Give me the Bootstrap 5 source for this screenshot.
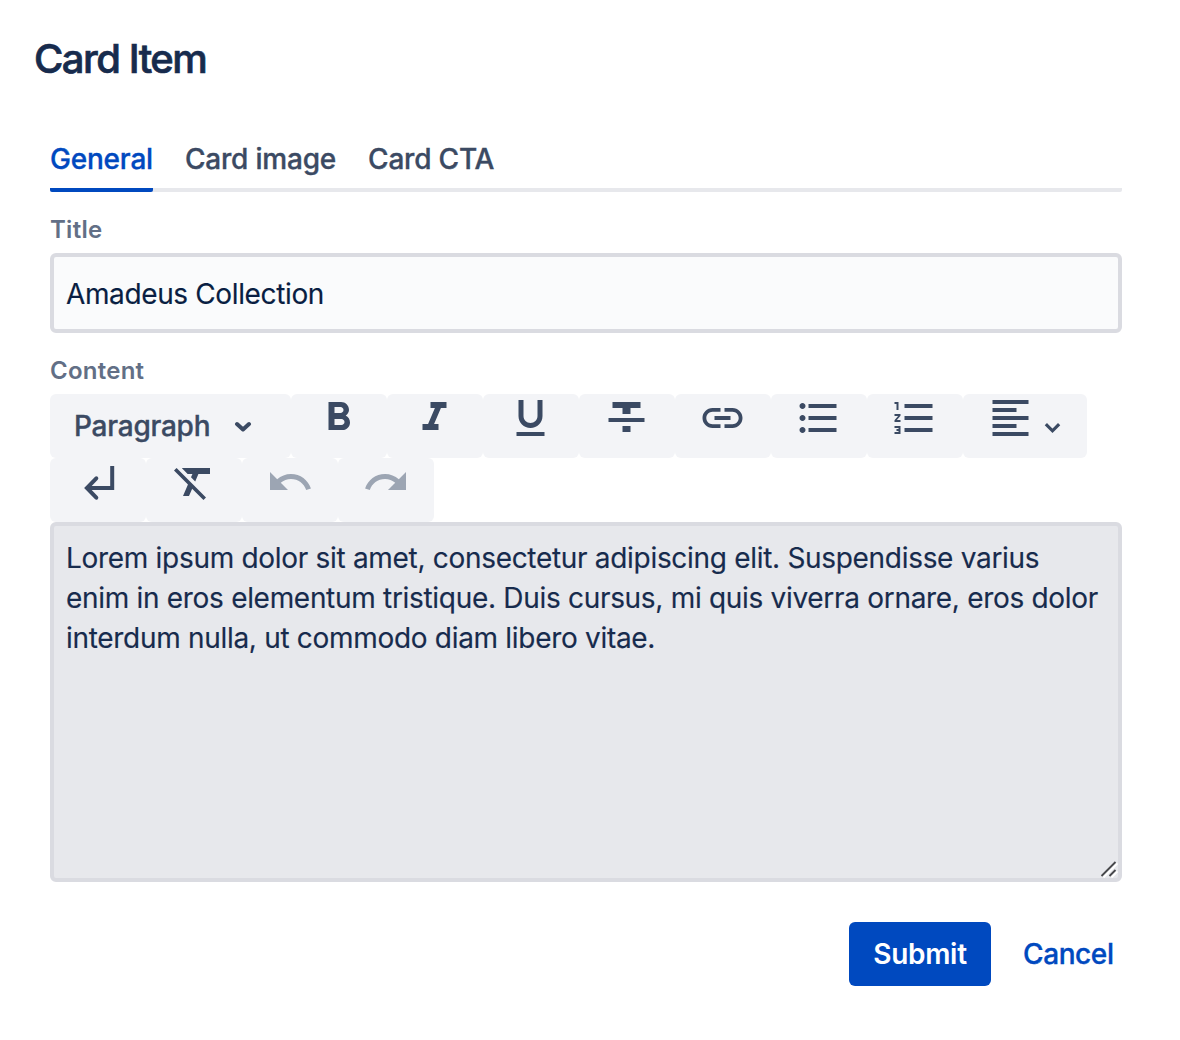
<!DOCTYPE html>
<html lang="en">
<head>
<meta charset="utf-8">
<meta name="viewport" content="width=device-width, initial-scale=1">
<title>Card Item</title>
<link href="https://cdn.jsdelivr.net/npm/bootstrap@5.3.0/dist/css/bootstrap.min.css" rel="stylesheet">
<style>
  body { font-family: Inter, "Liberation Sans", sans-serif; font-size: 28px; color: #172b4d; background: #fff; overflow: hidden; }
  .dialog-body { padding: 35px 58px 0 34px; }
  .dialog-title { font-size: 40px; line-height: 48px; font-weight: 500; letter-spacing: -1.5px; -webkit-text-stroke: .7px currentColor; color: #172b4d; margin: 0 0 52px; }
  .dialog-form { padding-left: 16px; }
  .form-tabs { height: 57px; gap: 32px; border-bottom: 4px solid #e7e8ec; border-radius: 2px; }
  .form-tabs .nav-link { padding: 4px 0 0; height: 57px; line-height: 40px; font-weight: 500; letter-spacing: -.2px; -webkit-text-stroke: .35px currentColor; color: #3b4a63; border-bottom: 4px solid transparent; border-radius: 2px; }
  .form-tabs .nav-link.active { color: #0049bf; border-color: #0049bf; }
  .field-label { display: block; padding: 22px 0 7px; font-size: 24px; line-height: 32px; font-weight: 600; letter-spacing: .25px; color: #626f86; }
  .title-input { height: 80px; padding: 2px 12px 0; border: 4px solid #dadbe1; border-radius: 6px; background: #fafbfc; font-size: 28px; letter-spacing: -.37px; -webkit-text-stroke: .15px currentColor; color: #091e42; }
  .tool { width: 96px; height: 64px; padding: 0 0 0 24px; border: 0; border-radius: 6px; background: #f3f4f7; color: #3b4a63; display: flex; align-items: flex-start; }
  .tool svg { display: block; fill: currentColor; flex: none; }
  .tool:nth-child(-n+9) > svg[width="48"] path { transform: translateX(-.25px); }
  .tool:disabled { color: #9ca5b3; }
  .tool-style { width: 240.5px; align-items: center; font-size: 28px; font-weight: 500; letter-spacing: -.24px; }
  .tool-style span { -webkit-text-stroke: .35px currentColor; }
  .tool-align { width: 124px; }
  .editor-text { height: 360px; padding: 12px; border: 4px solid #dadbe1; border-radius: 6px; background: #e7e8ec; font-size: 28px; line-height: 40px; letter-spacing: -.305px; -webkit-text-stroke: .15px currentColor; color: #172b4d; resize: none; overflow: hidden; }
  .grip { right: 4px; bottom: 4px; }
  .dialog-actions { padding-top: 40px; }
  .dialog-actions .btn { height: 64px; border: 0; border-radius: 6px; font-size: 28px; font-weight: 500; padding: 0; }
  .dialog-actions .btn-submit { width: 142px; background: #0049bf; color: #fff; font-weight: 600; letter-spacing: -.3px; }
  .dialog-actions .btn-cancel { width: 91px; margin: 0 8px 0 32px; color: #0049bf; letter-spacing: -.4px; -webkit-text-stroke: .35px currentColor; text-align: left; }
</style>
</head>
<body>
<main class="dialog-body">
  <h1 class="dialog-title">Card Item</h1>
  <form class="dialog-form">
    <nav class="nav form-tabs flex-nowrap">
      <a class="nav-link active" href="#">General</a>
      <a class="nav-link" href="#">Card image</a>
      <a class="nav-link" href="#">Card CTA</a>
    </nav>
    <label class="field-label" for="title">Title</label>
    <input class="form-control title-input" id="title" type="text" value="Amadeus Collection">
    <label class="field-label" for="content">Content</label>
    <div class="d-flex flex-wrap">
      <button type="button" class="tool tool-style"><span>Paragraph</span>
        <svg class="ms-4" width="18" height="12" viewBox="0 0 18 12"><path d="M3 4l6 5.500 6-5.500" fill="none" stroke="currentColor" stroke-width="4" stroke-linecap="round" stroke-linejoin="round"/></svg></button>
      <button type="button" class="tool" aria-label="Bold"><svg width="48" height="48" viewBox="0 0 24 24"><path d="M15.6 10.79c.97-.67 1.65-1.77 1.65-2.79 0-2.26-1.75-4-4-4H7v14h7.04c2.09 0 3.71-1.7 3.71-3.79 0-1.52-.86-2.82-2.15-3.42zM10 6.5h3c.83 0 1.5.67 1.5 1.5s-.67 1.5-1.5 1.5h-3v-3zm3.5 9H10v-3h3.5c.83 0 1.5.67 1.5 1.5s-.67 1.5-1.5 1.5z"/></svg></button>
      <button type="button" class="tool" aria-label="Italic"><svg width="48" height="48" viewBox="0 0 24 24"><path d="M10 4v3h2.21l-3.42 8H6v3h8v-3h-2.21l3.42-8H18V4z"/></svg></button>
      <button type="button" class="tool" aria-label="Underline"><svg width="48" height="48" viewBox="0 0 24 24"><path d="M12 17c3.31 0 6-2.69 6-6V3h-2.5v8c0 1.93-1.57 3.5-3.5 3.5S8.500 12.930 8.500 11V3H6v8c0 3.310 2.690 6 6 6zm-7 2v2h14v-2H5z"/></svg></button>
      <button type="button" class="tool" aria-label="Strikethrough"><svg width="48" height="48" viewBox="0 0 24 24"><path d="M10 19h4v-3h-4v3zM5 4v3h5v3h4V7h5V4H5zM3 14h18v-2H3v2z"/></svg></button>
      <button type="button" class="tool" aria-label="Link"><svg width="48" height="48" viewBox="0 0 24 24"><path d="M3.900 12c0-1.710 1.390-3.100 3.100-3.100h4V7H7c-2.760 0-5 2.240-5 5s2.240 5 5 5h4v-1.900H7c-1.710 0-3.100-1.390-3.100-3.100zM8 13h8v-2H8v2zm9-6h-4v1.900h4c1.710 0 3.100 1.390 3.100 3.100s-1.390 3.100-3.100 3.100h-4V17h4c2.760 0 5-2.240 5-5s-2.240-5-5-5z"/></svg></button>
      <button type="button" class="tool" aria-label="Bulleted list"><svg width="48" height="48" viewBox="0 0 24 24"><path d="M4 10.500c-.83 0-1.500.67-1.500 1.500s.67 1.500 1.500 1.500 1.500-.67 1.500-1.500-.67-1.500-1.500-1.500zm0-6c-.83 0-1.500.67-1.500 1.500S3.170 7.500 4 7.500 5.500 6.830 5.500 6 4.830 4.500 4 4.500zm0 12c-.83 0-1.500.68-1.500 1.500s.68 1.500 1.500 1.500 1.500-.68 1.500-1.500-.67-1.500-1.500-1.500zM7 19h14v-2H7v2zm0-6h14v-2H7v2zm0-8v2h14V5H7z"/></svg></button>
      <button type="button" class="tool" aria-label="Numbered list"><svg width="48" height="48" viewBox="0 0 24 24"><path d="M2 17h2v.5H3v1h1v.5H2v1h3v-4H2v1zm1-9h1V4H2v1h1v3zm-1 3h1.800L2 13.100v.9h3v-1H3.200L5 10.900V10H2v1zm5-6v2h14V5H7zm0 14h14v-2H7v2zm0-6h14v-2H7v2z"/></svg></button>
      <button type="button" class="tool tool-align" aria-label="Alignment"><svg width="48" height="48" viewBox="0 0 24 24"><path d="M15 15H3v2h12v-2zm0-8H3v2h12V7zM3 13h18v-2H3v2zm0 8h18v-2H3v2zM3 3v2h18V3H3z"/></svg>
        <svg width="36" height="64" viewBox="0 0 36 64"><path d="M12 31.300l5.500 5.500 5.500-5.500" fill="none" stroke="currentColor" stroke-width="3.200" stroke-linecap="square"/></svg></button>
      <button type="button" class="tool" aria-label="Line break"><svg width="48" height="48" viewBox="0 0 48 48"><path d="M38.200 8v22H13" fill="none" stroke="currentColor" stroke-width="4"/><path d="M22.300 20.300L12.900 30l9.400 9.700" fill="none" stroke="currentColor" stroke-width="4" stroke-linecap="round"/></svg></button>
      <button type="button" class="tool" aria-label="Clear formatting"><svg width="48" height="48" viewBox="0 0 24 24"><path d="M3.270 5L2 6.270l6.970 6.970L6.500 19h3l1.570-3.660L16.730 21 18 19.730 3.550 5.270 3.270 5zM6 5v.18L8.820 8h2.400l-.72 1.680 2.100 2.100L14.210 8H20V5H6z"/></svg></button>
      <button type="button" class="tool" disabled aria-label="Undo"><svg width="48" height="48" viewBox="0 0 24 24"><path d="M12.500 8c-2.650 0-5.050.99-6.900 2.600L2 7v9h9l-3.620-3.620c1.390-1.160 3.160-1.880 5.120-1.880 3.540 0 6.550 2.310 7.600 5.500l2.370-.78C21.080 11.030 17.150 8 12.500 8z"/></svg></button>
      <button type="button" class="tool" disabled aria-label="Redo"><svg width="48" height="48" viewBox="0 0 24 24"><path d="M18.400 10.600C16.550 8.990 14.150 8 11.500 8c-4.650 0-8.580 3.030-9.960 7.220L3.900 16c1.050-3.190 4.050-5.500 7.600-5.500 1.950 0 3.730.72 5.120 1.880L13 16h9V7l-3.600 3.600z"/></svg></button>
    </div>
    <div class="position-relative">
      <textarea class="form-control editor-text" id="content" spellcheck="false">Lorem ipsum dolor sit amet, consectetur adipiscing elit. Suspendisse varius enim in eros elementum tristique. Duis cursus, mi quis viverra ornare, eros dolor interdum nulla, ut commodo diam libero vitae.</textarea>
      <svg class="grip position-absolute" width="18" height="18" viewBox="0 0 18 18" fill="none" stroke-width="1.800"><path d="M3.500 17.500L17.500 3.500M11.500 17.500L17.500 11.500" stroke="#fff"/><path d="M1.500 16L15.500 2M9.500 16L15.500 10" stroke="#47484b"/></svg>
    </div>
    <div class="dialog-actions d-flex justify-content-end">
      <button type="button" class="btn btn-submit">Submit</button>
      <button type="button" class="btn btn-cancel">Cancel</button>
    </div>
  </form>
</main>
<script src="https://cdn.jsdelivr.net/npm/bootstrap@5.3.0/dist/js/bootstrap.bundle.min.js"></script>
</body>
</html>
